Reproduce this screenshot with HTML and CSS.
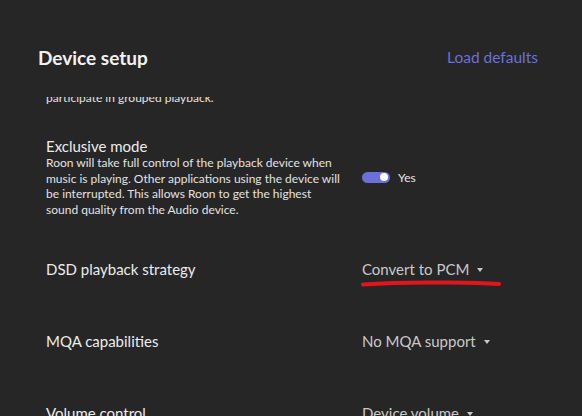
FILE: index.html
```html
<!DOCTYPE html>
<html lang="en">
<head>
    <meta charset="UTF-8">
    <meta name="viewport" content="width=device-width, initial-scale=1.0">
    <title>Device setup</title>
    <link rel="stylesheet" href="styles.css">
</head>
<body>
    <header class="dialog-header">
        <h1 class="dialog-title">Device setup</h1>
        <a class="load-defaults" href="#">Load defaults</a>
    </header>

    <div class="settings">
        <div class="setting setting-cut">
            <div class="setting-label">
                <p class="setting-desc">participate in grouped playback.</p>
            </div>
            <div class="setting-value"></div>
        </div>

        <div class="setting">
            <div class="setting-label">
                <div class="setting-name">Exclusive mode</div>
                <p class="setting-desc">Roon will take full control of the playback device when music is playing. Other applications using the device will be interrupted. This allows Roon to get the highest sound quality from the Audio device.</p>
            </div>
            <div class="setting-value">
                <span class="toggle on"><span class="knob"></span></span>
                <span class="toggle-text">Yes</span>
            </div>
        </div>

        <div class="setting">
            <div class="setting-label">
                <div class="setting-name">DSD playback strategy</div>
            </div>
            <div class="setting-value">
                <span class="dropdown">Convert to PCM <span class="caret"></span>
                    <svg class="scribble" width="142" height="10" viewBox="0 0 142 10">
                        <path d="M3 5.5 C 30 3.5, 60 3.2, 90 3.6 C 110 3.9, 125 4.3, 139 5" fill="none" stroke="#e3141b" stroke-width="4" stroke-linecap="round"/>
                    </svg>
                </span>
            </div>
        </div>

        <div class="setting">
            <div class="setting-label">
                <div class="setting-name">MQA capabilities</div>
            </div>
            <div class="setting-value">
                <span class="dropdown">No MQA support <span class="caret"></span></span>
            </div>
        </div>

        <div class="setting">
            <div class="setting-label">
                <div class="setting-name">Volume control</div>
            </div>
            <div class="setting-value">
                <span class="dropdown">Device volume <span class="caret"></span></span>
            </div>
        </div>
    </div>
</body>
</html>
```

FILE: styles.css
```css
body {
    margin: 0;
    height: 100vh;
    overflow: hidden;
    background-color: #262626;
    font-family: 'Lato', 'Open Sans', sans-serif;
    color: #e6e6e6;
}

.dialog-header {
    display: flex;
    justify-content: space-between;
    align-items: flex-start;
    height: 97px;
    padding: 0 44px 0 38px;
    box-sizing: border-box;
}

.dialog-title {
    margin: 46px 0 0 0;
    font-size: 19px;
    line-height: 24px;
    font-weight: bold;
    color: #f2f2f2;
}

.load-defaults {
    margin-top: 47px;
    font-size: 15.5px;
    line-height: 20px;
    color: #6d70da;
    text-decoration: none;
}

.settings {
    height: 319px;
    overflow: hidden;
}

.setting {
    display: grid;
    grid-template-columns: 316px 1fr;
    align-items: center;
    min-height: 40px;
    padding: 16px 0 16px 46px;
}

.setting-cut {
    min-height: 0;
    padding-top: 0;
    margin-top: -7.5px;
}

.setting-name {
    font-size: 15px;
    line-height: 18px;
    color: #ececec;
}

.setting-desc {
    margin: 0;
    width: 298px;
    font-size: 12px;
    line-height: 15.5px;
    color: #e2e2e2;
}

.setting-value {
    display: flex;
    align-items: center;
    gap: 8px;
}

.toggle {
    position: relative;
    width: 28px;
    height: 11px;
    border-radius: 6px;
    background-color: #6b6fd8;
}

.toggle .knob {
    position: absolute;
    top: 1.5px;
    right: 2px;
    width: 8px;
    height: 8px;
    border-radius: 50%;
    background-color: #ffffff;
}

.toggle-text {
    font-size: 12px;
    color: #e6e6e6;
}

.dropdown {
    position: relative;
    display: inline-flex;
    align-items: center;
    font-size: 15px;
    line-height: 18px;
    color: #c9c9c9;
}

.caret {
    display: inline-block;
    margin-left: 8px;
    margin-top: 2px;
    border-left: 3.5px solid transparent;
    border-right: 3.5px solid transparent;
    border-top: 4.5px solid #c9c9c9;
}

.scribble {
    position: absolute;
    left: -2px;
    top: 19px;
}
```
